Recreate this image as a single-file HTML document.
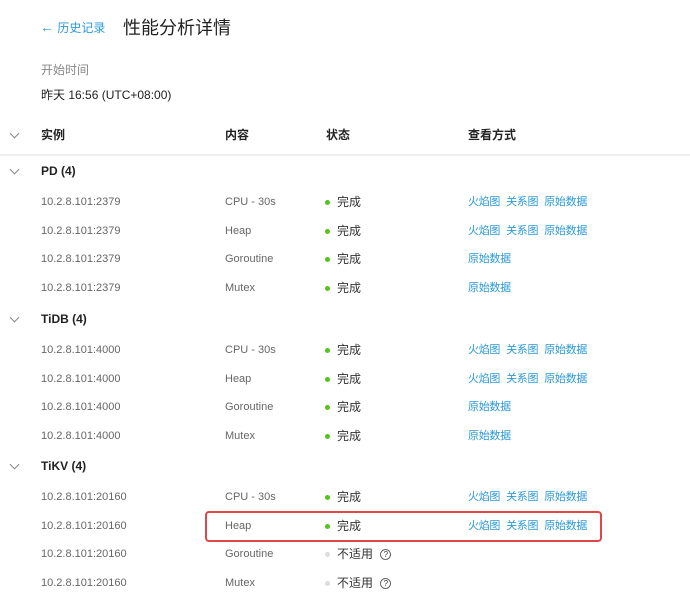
<!DOCTYPE html>
<html><head><meta charset="utf-8"><style>
body{margin:0;width:690px;height:605px;background:#fff;font-family:"Liberation Sans","Noto Sans CJK SC",sans-serif;position:relative;overflow:hidden}
.a{position:absolute;white-space:nowrap;line-height:16px}
.g{color:#666;font-size:11px}
.d{color:#333;font-size:12px}
.l{color:#2b9ad6;font-size:11px;letter-spacing:-0.3px}
.h{color:#222;font-size:12px;font-weight:bold}
.dot{position:absolute;width:5px;height:5px;border-radius:50%;background:#52c41a}
.chev{position:absolute;width:6px;height:6px;border-right:1px solid #888;border-bottom:1px solid #888;transform:rotate(45deg)}
</style></head><body>
<div class="a" style="left:40px;top:19px;color:#2b9ad6;font-size:12px"><span style="font-size:14px">←</span> 历史记录</div>
<div class="a" style="left:123px;top:17px;color:#222;font-size:18px;line-height:22px">性能分析详情</div>
<div class="a" style="left:41px;top:62px;color:#888;font-size:12px">开始时间</div>
<div class="a" style="left:41px;top:87px;color:#222;font-size:12px">昨天 16:56 (UTC+08:00)</div>
<div class="chev" style="left:11px;top:130px"></div>
<div class="a h" style="left:41px;top:127px">实例</div>
<div class="a h" style="left:225px;top:127px">内容</div>
<div class="a h" style="left:326px;top:127px">状态</div>
<div class="a h" style="left:468px;top:127px">查看方式</div>
<div style="position:absolute;left:0;top:154px;width:690px;height:2px;background:#f0f0f0"></div>
<div style="position:absolute;left:205px;top:511px;width:393px;height:27px;border:2px solid #e0474a;border-radius:4px"></div>
<div id="rows"></div>
<script>
var groups=[["PD (4)",171,"10.2.8.101:2379",true],["TiDB (4)",319,"10.2.8.101:4000",true],["TiKV (4)",466,"10.2.8.101:20160",false]];
var kinds=["CPU - 30s","Heap","Goroutine","Mutex"];
var h="";
groups.forEach(function(g){
 h+='<div class="chev" style="left:11px;top:'+(g[1]-5)+'px"></div><div class="a h" style="left:41px;top:'+(g[1]-8)+'px">'+g[0]+'</div>';
 for(var i=0;i<4;i++){
  var y=g[1]+31+i*28.7;
  h+='<div class="a g" style="left:41px;top:'+(y-8)+'px">'+g[2]+'</div>';
  h+='<div class="a g" style="left:225px;top:'+(y-8)+'px">'+kinds[i]+'</div>';
  var ok=g[3]||i<2;
  h+='<div class="dot" style="left:325px;top:'+(y-2)+'px;background:'+(ok?'#52c41a':'#ddd')+'"></div>';
  h+='<div class="a d" style="left:337px;top:'+(y-8)+'px">'+(ok?'完成':'不适用 <span style="display:inline-block;width:9px;height:9px;border:1px solid #666;border-radius:50%;font-size:8px;line-height:9px;text-align:center;margin-left:4px;vertical-align:1px">?</span>')+'</div>';
  if(ok){
   if(i<2) h+='<div class="a l" style="left:468px;top:'+(y-8)+'px">火焰图<span style="margin-left:6px">关系图</span><span style="margin-left:6px">原始数据</span></div>';
   else h+='<div class="a l" style="left:468px;top:'+(y-8)+'px">原始数据</div>';
  }
 }
});
document.getElementById("rows").innerHTML=h;
</script>
</body></html>
